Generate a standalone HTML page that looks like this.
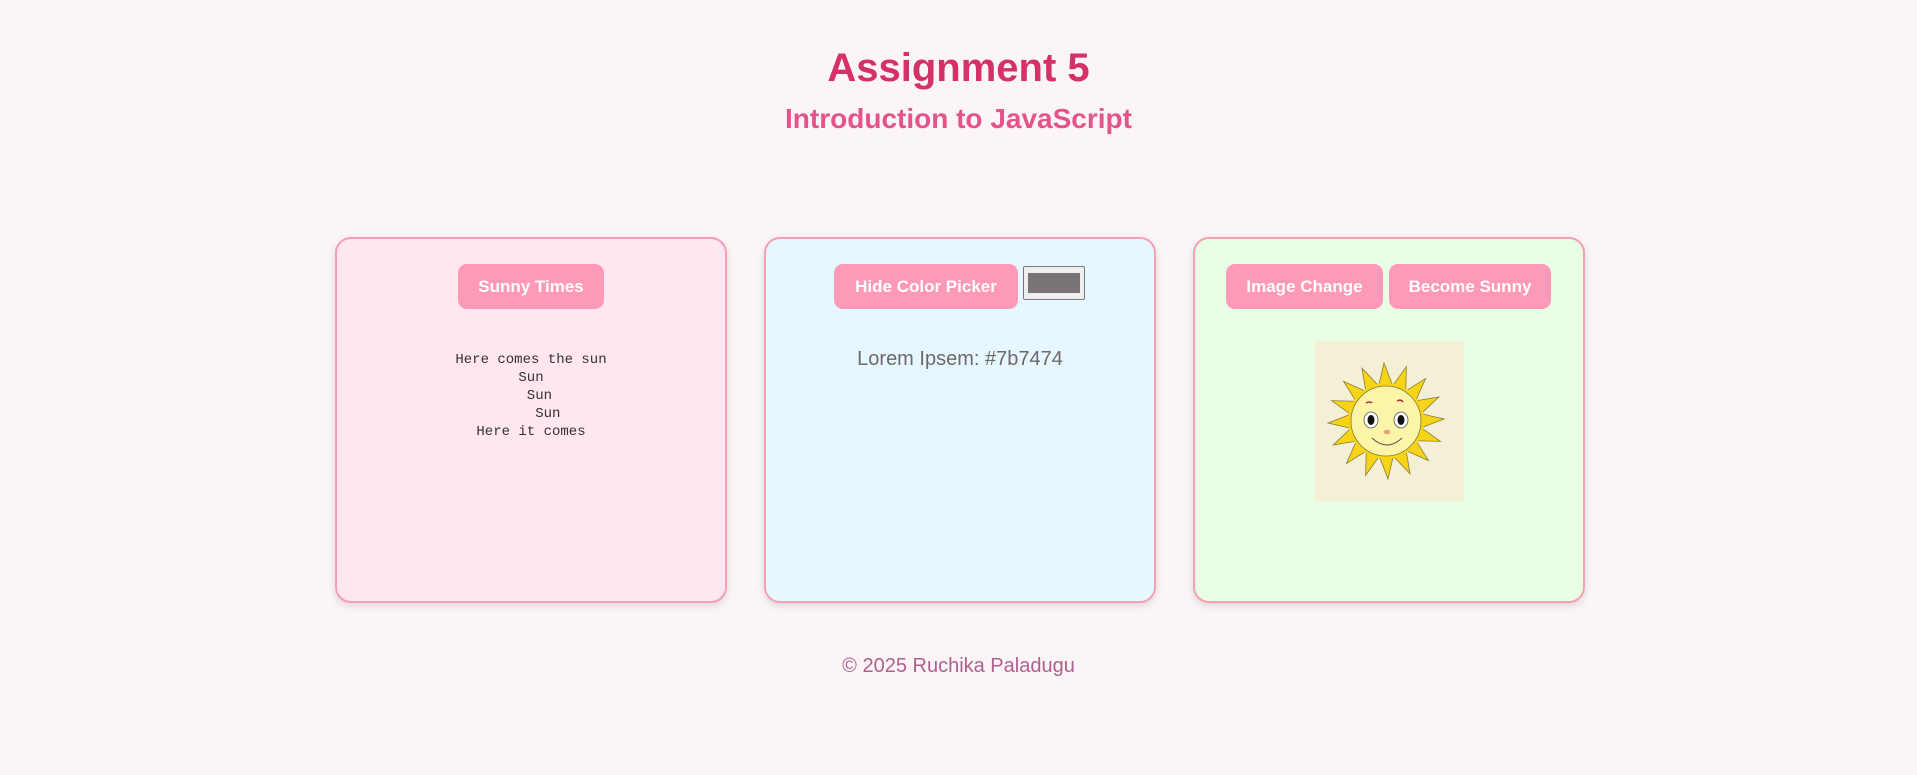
<!DOCTYPE html>
<html><head><meta charset="utf-8"><style>
*{margin:0;padding:0;box-sizing:border-box}
body{width:1917px;height:775px;background:#fbf5f7;font-family:"Liberation Sans",Arial,sans-serif;position:relative;overflow:hidden}
.abs{position:absolute}
h1{position:absolute;left:0;width:1917px;text-align:center;top:46px;font-size:40px;color:#d63068;font-weight:bold}
h2{position:absolute;left:0;width:1917px;text-align:center;top:103px;font-size:28px;color:#e4548a;font-weight:bold}
.card{position:absolute;top:237px;width:392px;height:366px;border:2px solid #f4a0b4;border-radius:16px;box-shadow:0 3px 8px rgba(0,0,0,0.12)}
.btn{position:absolute;top:264px;height:45px;background:#ff99b8;color:#fff;font-weight:bold;font-size:17px;border-radius:9px;display:flex;align-items:center;justify-content:center}
pre{position:absolute;left:335px;width:392px;top:351px;font-family:"Liberation Mono",monospace;font-size:14px;line-height:18px;color:#333;text-align:center}
</style></head><body>
<h1>Assignment 5</h1>
<h2>Introduction to JavaScript</h2>
<div class="card" style="left:335px;background:#ffe6f0"></div>
<div class="card" style="left:764px;background:#e6f7ff"></div>
<div class="card" style="left:1193px;background:#e8ffe6"></div>
<div class="btn" style="left:458px;width:146px">Sunny Times</div>
<pre>Here comes the sun
Sun
  Sun
    Sun
Here it comes</pre>
<div class="btn" style="left:834px;width:184px">Hide Color Picker</div>
<div class="abs" style="left:1023px;top:266px;width:62px;height:34px;background:#efefef;border:1px solid #777;border-radius:2px"><div class="abs" style="left:4px;top:6px;width:52px;height:20px;background:#7b7474"></div></div>
<div class="abs" style="left:764px;width:392px;top:348px;text-align:center;font-size:20px;color:#6f6868">Lorem Ipsem: #7b7474</div>
<div class="btn" style="left:1226px;width:157px">Image Change</div>
<div class="btn" style="left:1389px;width:162px">Become Sunny</div>
<svg class="abs" style="left:1314px;top:341px" width="150" height="160" viewBox="0 0 150 160">
<rect width="150" height="160" fill="#f3f0d6"/>
<g fill="#f7d417" stroke="#8a7a3a" stroke-width="0.8">
<polygon id="r" points="64,48 70,22 80,48"/>
<polygon points="64,48 70,22 80,48" transform="rotate(22.5 72 80)"/>
<polygon points="64,48 70,22 80,48" transform="rotate(45 72 80)"/>
<polygon points="64,48 70,22 80,48" transform="rotate(67.5 72 80)"/>
<polygon points="64,48 70,22 80,48" transform="rotate(90 72 80)"/>
<polygon points="64,48 70,22 80,48" transform="rotate(112.5 72 80)"/>
<polygon points="64,48 70,22 80,48" transform="rotate(135 72 80)"/>
<polygon points="64,48 70,22 80,48" transform="rotate(157.5 72 80)"/>
<polygon points="64,48 70,22 80,48" transform="rotate(180 72 80)"/>
<polygon points="64,48 70,22 80,48" transform="rotate(202.5 72 80)"/>
<polygon points="64,48 70,22 80,48" transform="rotate(225 72 80)"/>
<polygon points="64,48 70,22 80,48" transform="rotate(247.5 72 80)"/>
<polygon points="64,48 70,22 80,48" transform="rotate(270 72 80)"/>
<polygon points="64,48 70,22 80,48" transform="rotate(292.5 72 80)"/>
<polygon points="64,48 70,22 80,48" transform="rotate(315 72 80)"/>
<polygon points="64,48 70,22 80,48" transform="rotate(337.5 72 80)"/>
</g>
<circle cx="72" cy="80" r="38" fill="#f7d417"/>
<circle cx="72" cy="80" r="35" fill="#fcf4a6" stroke="#7a7a3a" stroke-width="0.8"/>
<ellipse cx="57" cy="79" rx="7" ry="8" fill="#fff" stroke="#555" stroke-width="0.8"/>
<ellipse cx="87" cy="79" rx="7" ry="8" fill="#fff" stroke="#555" stroke-width="0.8"/>
<ellipse cx="57" cy="79" rx="3.5" ry="5" fill="#111"/>
<ellipse cx="87" cy="79" rx="3.5" ry="5" fill="#111"/>
<path d="M52 62 q4 -2 6 0 M83 60 q4 -2 6 1" stroke="#a33" stroke-width="1.5" fill="none"/>
<ellipse cx="73" cy="91" rx="3.5" ry="2.3" fill="#e9a37a"/>
<path d="M58 97 q15 14 30 0" stroke="#555" stroke-width="1" fill="none"/>
</svg>
<div class="abs" style="left:0;width:1917px;top:655px;text-align:center;font-size:20px;color:#b0608e">© 2025 Ruchika Paladugu</div>
</body></html>
